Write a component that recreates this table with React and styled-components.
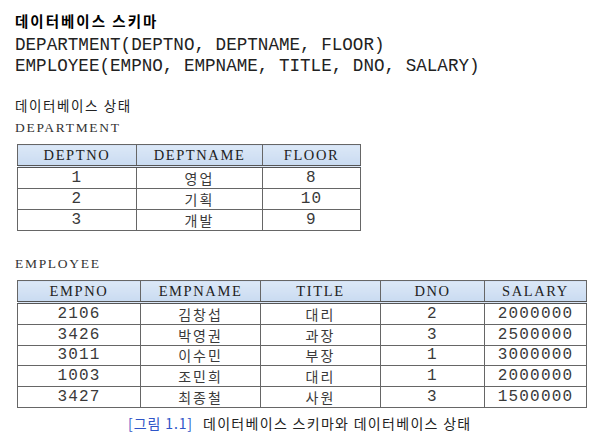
import styled, { createGlobalStyle } from 'styled-components';

const GlobalStyle = createGlobalStyle`
  body {
    margin: 0;
    background: #fff;
    font-family: 'Noto Sans CJK KR', 'Noto Sans', sans-serif;
    color: #111;
  }
`;

const Page = styled.div`
  width: 602px;
  height: 435px;
  padding: 10px 0 0 15px;
  box-sizing: border-box;
  overflow: hidden;
`;

const Title = styled.div`
  font-size: 14.5px;
  font-weight: 700;
  letter-spacing: 2px;
  line-height: 22px;
  color: #000;
`;

const SchemaBlock = styled.div`
  margin-top: 3px;
`;

const Schema = styled.div`
  font-family: 'Liberation Mono', monospace;
  font-size: 17.6px;
  line-height: 21px;
  color: #222;
  white-space: pre;
`;

const SubTitle = styled.div`
  margin-top: 18px;
  font-size: 13.5px;
  letter-spacing: 1.6px;
  line-height: 20px;
  color: #222;
`;

const Label = styled.div`
  font-family: 'Liberation Serif', serif;
  font-size: 13.5px;
  letter-spacing: 1.7px;
  color: #333;
  line-height: 18px;
  margin-top: ${(p) => p.$top || 5}px;
`;

const Table = styled.table`
  border-collapse: collapse;
  margin-left: 2px;
  margin-top: ${(p) => p.$top}px;
  table-layout: fixed;
  border: 1px solid #555;
`;

const Th = styled.th`
  font-family: 'Liberation Serif', serif;
  font-weight: 400;
  font-size: 14.5px;
  letter-spacing: 1.6px;
  color: #222;
  height: 20px;
  padding: 0;
  border: 1px solid #666;
  border-bottom: 3px double #555;
  background: linear-gradient(#dce8f7, #c9dbf1);
  text-align: center;
`;

const Td = styled.td`
  font-family: ${(p) => (p.$ko ? "'Noto Sans CJK KR', sans-serif" : "'Liberation Mono', monospace")};
  font-size: ${(p) => (p.$ko ? '14px' : '16px')};
  letter-spacing: ${(p) => (p.$ko ? '2px' : '1.2px')};
  color: #3a3a3a;
  height: ${(p) => p.$h}px;
  padding: 0;
  line-height: 1;
  border: 1px solid #666;
  text-align: center;
`;

const Caption = styled.div`
  margin-top: 6px;
  padding-left: 113px;
  font-size: 14px;
  letter-spacing: 1.3px;
  line-height: 18px;
  color: #222;
  span {
    color: #2f55c8;
    margin-right: 10px;
    letter-spacing: 0.9px;
  }
`;

const dept = [
  ['1', '영업', '8'],
  ['2', '기획', '10'],
  ['3', '개발', '9'],
];

const emp = [
  ['2106', '김창섭', '대리', '2', '2000000'],
  ['3426', '박영권', '과장', '3', '2500000'],
  ['3011', '이수민', '부장', '1', '3000000'],
  ['1003', '조민희', '대리', '1', '2000000'],
  ['3427', '최종철', '사원', '3', '1500000'],
];

const ko = (v) => /[가-힣]/.test(v);

export default function App() {
  return (
    <Page>
      <GlobalStyle />
      <Title>데이터베이스 스키마</Title>
      <SchemaBlock>
        <Schema>DEPARTMENT(DEPTNO, DEPTNAME, FLOOR)</Schema>
        <Schema>EMPLOYEE(EMPNO, EMPNAME, TITLE, DNO, SALARY)</Schema>
      </SchemaBlock>
      <SubTitle>데이터베이스 상태</SubTitle>
      <Label $top={4}>DEPARTMENT</Label>
      <Table $top={7} style={{ width: 343 }}>
        <colgroup>
          <col width="119" />
          <col width="126" />
          <col width="98" />
        </colgroup>
        <thead>
          <tr>
            <Th>DEPTNO</Th>
            <Th>DEPTNAME</Th>
            <Th>FLOOR</Th>
          </tr>
        </thead>
        <tbody>
          {dept.map((r) => (
            <tr key={r[0]}>
              {r.map((c, i) => (
                <Td key={i} $ko={ko(c)} $h={20}>{c}</Td>
              ))}
            </tr>
          ))}
        </tbody>
      </Table>
      <Label $top={24}>EMPLOYEE</Label>
      <Table $top={7} style={{ width: 569 }}>
        <colgroup>
          <col width="123" />
          <col width="120" />
          <col width="120" />
          <col width="104" />
          <col width="102" />
        </colgroup>
        <thead>
          <tr>
            <Th>EMPNO</Th>
            <Th>EMPNAME</Th>
            <Th>TITLE</Th>
            <Th>DNO</Th>
            <Th>SALARY</Th>
          </tr>
        </thead>
        <tbody>
          {emp.map((r) => (
            <tr key={r[0] + r[1]}>
              {r.map((c, i) => (
                <Td key={i} $ko={ko(c)} $h={19.8}>{c}</Td>
              ))}
            </tr>
          ))}
        </tbody>
      </Table>
      <Caption>
        <span>[그림 1.1]</span>데이터베이스 스키마와 데이터베이스 상태
      </Caption>
    </Page>
  );
}
